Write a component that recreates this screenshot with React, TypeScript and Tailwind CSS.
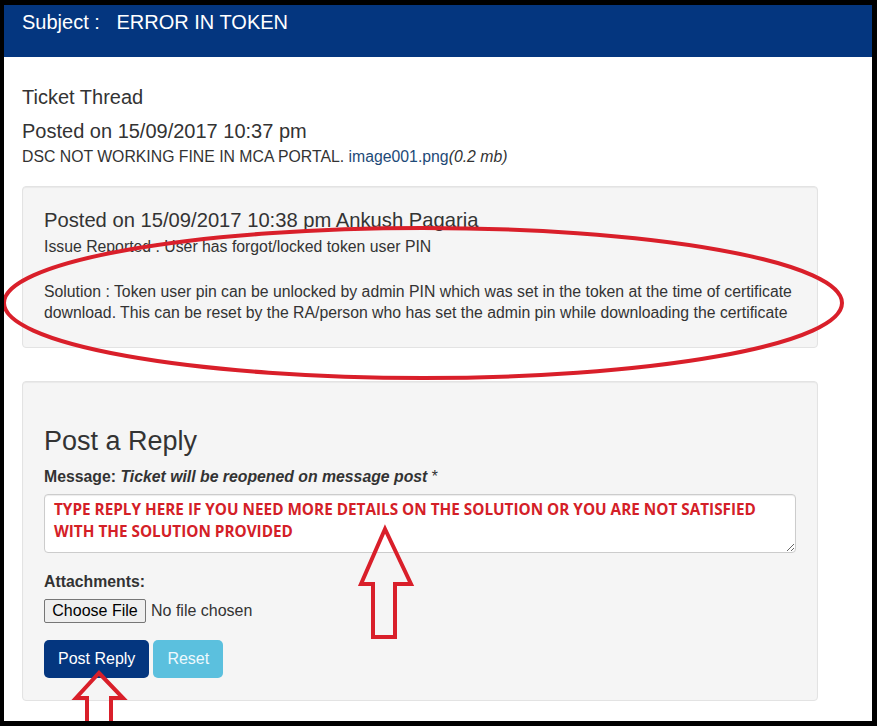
import React from "react";

export default function App() {
  return (
    <div className="relative w-[877px] h-[726px] bg-black pt-[5px] pl-[4px] pr-[5px] pb-[5px] font-['Liberation_Sans',Arial,sans-serif] text-[#333]">
      <div className="w-full h-full bg-white overflow-hidden flex flex-col">
        <div className="h-[52px] shrink-0 bg-[#04367f] pl-[18px] pt-[6px] text-white text-[20px] leading-[22px] whitespace-pre">
          {"Subject :   ERROR IN TOKEN"}
        </div>
        <div className="pl-[18px] flex flex-col">
          <div className="mt-[29px] text-[20px] leading-[22px]">Ticket Thread</div>
          <div className="mt-[12px] text-[20px] leading-[22px]">Posted on 15/09/2017 10:37 pm</div>
          <div className="mt-[5px] text-[15.8px] leading-[20px]">
            DSC NOT WORKING FINE IN MCA PORTAL.{" "}
            <span className="text-[#1d4a78]">image001.png</span>
            <span className="italic">(0.2 mb)</span>
          </div>

          <div className="mt-[19px] w-[796px] bg-[#f5f5f5] border border-[#e3e3e3] rounded-[4px] shadow-[inset_0_1px_1px_rgba(0,0,0,0.05)] px-[21px] pt-[22px] pb-[24px]">
            <div className="text-[20.2px] leading-[22px]">Posted on 15/09/2017 10:38 pm Ankush Pagaria</div>
            <div className="mt-[5px] text-[15.8px] leading-[21px]">Issue Reported : User has forgot/locked token user PIN</div>
            <div className="mt-[24px] text-[15.8px] leading-[21px]">
              Solution : Token user pin can be unlocked by admin PIN which was set in the token at the time of certificate download. This can be reset by the RA/person who has set the admin pin while downloading the certificate
            </div>
          </div>

          <div className="mt-[33px] w-[796px] bg-[#f5f5f5] border border-[#e3e3e3] rounded-[4px] shadow-[inset_0_1px_1px_rgba(0,0,0,0.05)] px-[21px] pt-[44px] pb-[22px] flex flex-col">
            <div className="text-[27px] leading-[30px]">Post a Reply</div>
            <div className="mt-[11px] text-[15.8px] leading-[20px] font-bold">
              Message: <span className="italic">Ticket will be reopened on message post</span> <span className="font-normal">*</span>
            </div>
            <textarea
              readOnly
              defaultValue="TYPE REPLY HERE IF YOU NEED MORE DETAILS ON THE SOLUTION OR YOU ARE NOT SATISFIED WITH THE SOLUTION PROVIDED"
              className="mt-[7px] w-[752px] h-[59px] bg-white border border-[#ccc] rounded-[4px] shadow-[inset_0_1px_1px_rgba(0,0,0,0.075)] px-[9px] pt-[3px] text-[15.3px] leading-[22px] font-bold text-[#d42027] font-['Open_Sans',sans-serif] outline-none overflow-hidden"
            />
            <div className="mt-[19px] text-[15.8px] leading-[20px] font-bold">Attachments:</div>
            <div className="mt-[7px] flex items-center h-[24px]">
              <div className="h-[24px] w-[102px] bg-[#efefef] border border-[#767676] rounded-[2px] flex items-center justify-center text-[16px] text-black">
                Choose File
              </div>
              <span className="ml-[5px] text-[16px] text-[#333]">No file chosen</span>
            </div>
            <div className="mt-[17px] flex gap-[4px]">
              <div className="h-[38px] px-[14px] bg-[#04367f] rounded-[5px] text-white text-[16px] flex items-center">Post Reply</div>
              <div className="h-[38px] px-[14px] bg-[#5bc0de] rounded-[5px] text-[#eef9fd] text-[16px] flex items-center">Reset</div>
            </div>
          </div>
        </div>
      </div>

      <svg className="absolute inset-0 pointer-events-none" width="877" height="726" viewBox="0 0 877 726">
        <defs>
          <clipPath id="inner">
            <rect x="4" y="5" width="868" height="716" />
          </clipPath>
        </defs>
        <g clipPath="url(#inner)" fill="none" stroke="#d91f2a" strokeLinejoin="miter">
          <ellipse cx="423" cy="303" rx="419" ry="75" strokeWidth="4" />
          <path d="M385,529 L411,584 L395,584 L395,637 L373,637 L373,584 L361,584 Z" strokeWidth="4" />
          <path d="M99,673 L123,698 L111,698 L111,730 L87,730 L87,698 L76,698 Z" strokeWidth="4" />
        </g>
      </svg>
    </div>
  );
}
